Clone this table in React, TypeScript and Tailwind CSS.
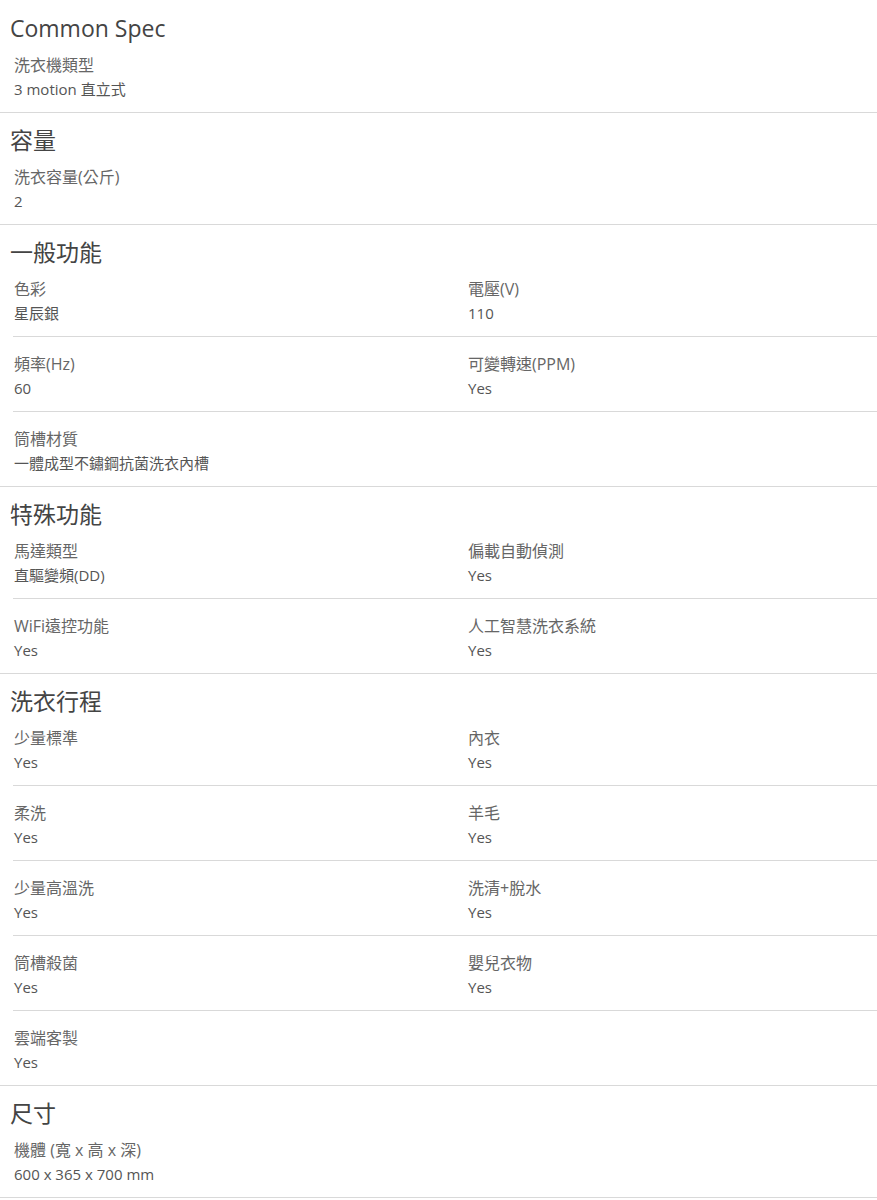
import React from "react";

type Spec = { label: string; value: string };
type Section = { title: string; cols: 1 | 2; specs: Spec[] };

const sections: Section[] = [
  { title: "Common Spec", cols: 1, specs: [{ label: "洗衣機類型", value: "3 motion 直立式" }] },
  { title: "容量", cols: 1, specs: [{ label: "洗衣容量(公斤)", value: "2" }] },
  {
    title: "一般功能",
    cols: 2,
    specs: [
      { label: "色彩", value: "星辰銀" },
      { label: "電壓(V)", value: "110" },
      { label: "頻率(Hz)", value: "60" },
      { label: "可變轉速(PPM)", value: "Yes" },
      { label: "筒槽材質", value: "一體成型不鏽鋼抗菌洗衣內槽" },
    ],
  },
  {
    title: "特殊功能",
    cols: 2,
    specs: [
      { label: "馬達類型", value: "直驅變頻(DD)" },
      { label: "偏載自動偵測", value: "Yes" },
      { label: "WiFi遠控功能", value: "Yes" },
      { label: "人工智慧洗衣系統", value: "Yes" },
    ],
  },
  {
    title: "洗衣行程",
    cols: 2,
    specs: [
      { label: "少量標準", value: "Yes" },
      { label: "內衣", value: "Yes" },
      { label: "柔洗", value: "Yes" },
      { label: "羊毛", value: "Yes" },
      { label: "少量高溫洗", value: "Yes" },
      { label: "洗清+脫水", value: "Yes" },
      { label: "筒槽殺菌", value: "Yes" },
      { label: "嬰兒衣物", value: "Yes" },
      { label: "雲端客製", value: "Yes" },
    ],
  },
  { title: "尺寸", cols: 1, specs: [{ label: "機體 (寬 x 高 x 深)", value: "600 x 365 x 700 mm" }] },
];

function chunk(specs: Spec[], size: number) {
  const rows: Spec[][] = [];
  for (let i = 0; i < specs.length; i += size) rows.push(specs.slice(i, i + size));
  return rows;
}

function Cell({ spec }: { spec: Spec }) {
  return (
    <div>
      <div className="text-[16px] leading-[24px] text-[#666]">{spec.label}</div>
      <div className="text-[15px] leading-[24px] text-[#555]">{spec.value}</div>
    </div>
  );
}

export default function App() {
  return (
    <div
      className="w-[877px] bg-white"
      style={{ fontFamily: '"Open Sans", "Noto Sans CJK TC", sans-serif' }}
    >
      {sections.map((section, si) => {
        const rows = chunk(section.specs, section.cols);
        return (
          <section key={section.title} className="border-b border-[#d9d9d9]">
            <h2
              className={`${si === 0 ? "pt-[13px]" : "pt-[12px]"} pl-[10px] text-[23px] leading-[30px] text-[#444]`}
            >
              {section.title}
            </h2>
            <div>
              {rows.map((row, ri) => (
                <div
                  key={ri}
                  className={`ml-[13px] grid grid-cols-[454px_1fr] pl-[1px] pt-[15px] pb-[11px] first:pt-[10px] ${
                    ri < rows.length - 1 ? "border-b border-[#d9d9d9]" : ""
                  }`}
                >
                  {row.map((spec) => (
                    <Cell key={spec.label} spec={spec} />
                  ))}
                </div>
              ))}
            </div>
          </section>
        );
      })}
    </div>
  );
}
